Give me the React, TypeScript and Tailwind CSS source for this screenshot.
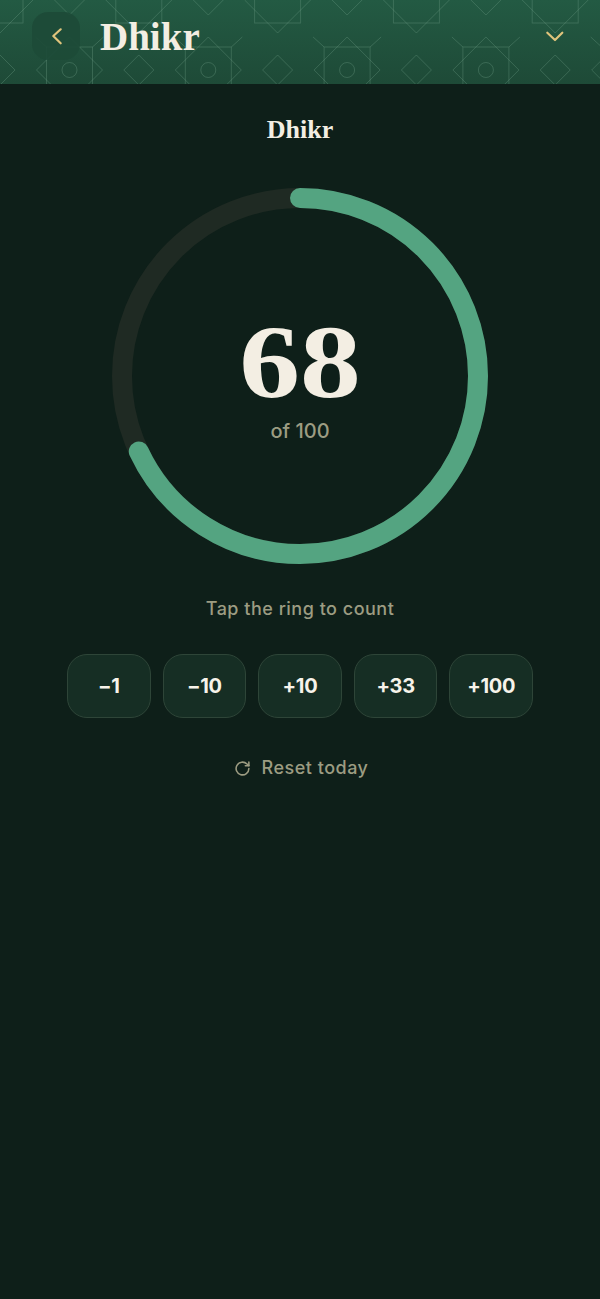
const star = (cx: number, cy: number, extras: boolean, key: string) => (
  <g key={key}>
    <rect x={cx - 23} y={cy - 23} width={46} height={46} />
    <path d={`M${cx} ${cy - 33}L${cx + 33} ${cy}L${cx} ${cy + 33}L${cx - 33} ${cy}Z`} />
    {extras && <path d={`M${cx - 34} ${cy - 33}L${cx - 23} ${cy - 23}M${cx + 34} ${cy - 33}L${cx + 23} ${cy - 23}`} />}
    {extras && <circle cx={cx} cy={cy} r={7.5} />}
  </g>
);
const diamond = (cx: number, cy: number, key: string) => (
  <path key={key} d={`M${cx} ${cy - 15}L${cx + 15} ${cy}L${cx} ${cy + 15}L${cx - 15} ${cy}Z`} />
);

function HeaderPattern() {
  const P = 138.8;
  const items = [];
  for (let i = 0; i < 6; i++) {
    items.push(star(69.5 + i * P, 70, true, `s${i}`));
    items.push(star(i * P, 0, false, `u${i}`));
    items.push(diamond(i * P, 70, `d${i}`));
    items.push(diamond(69.5 + i * P, 0, `e${i}`));
  }
  return (
    <svg className="absolute inset-0 h-full w-full" viewBox="0 0 600 84" fill="none" stroke="#6f9f86" strokeOpacity="0.34" strokeWidth="1">
      {items}
    </svg>
  );
}

function Ring() {
  const r = 178;
  const c = 2 * Math.PI * r;
  return (
    <svg width="400" height="400" viewBox="0 0 400 400" className="absolute inset-0" fill="none">
      <circle cx="200" cy="200" r={r} stroke="#1f2a23" strokeWidth="20" />
      <circle
        cx="200"
        cy="200"
        r={r}
        stroke="#54a481"
        strokeWidth="20"
        strokeLinecap="round"
        strokeDasharray={`${c * 0.68} ${c}`}
        transform="rotate(-90 200 200)"
      />
    </svg>
  );
}

const SANS = "font-['Inter','Noto_Sans',sans-serif]";

export default function App() {
  return (
    <div className="min-h-[1299px] w-[600px] bg-[#0e1f19] text-[#f3eee3]">
      <header className="relative flex h-[84px] items-center overflow-hidden bg-gradient-to-b from-[#235a43] to-[#1e4a37]">
        <HeaderPattern />
        <div className="relative flex h-[72px] w-full items-center self-start px-8">
          <button className="flex h-12 w-12 items-center justify-center rounded-2xl bg-[#1d4a37]/90 text-[#e0c47c]">
            <svg width="24" height="24" viewBox="0 0 24 24" fill="none" stroke="currentColor" strokeWidth="2.2" strokeLinecap="round" strokeLinejoin="round">
              <path d="M16.7 5.3 9.3 12l7.4 7.3" />
            </svg>
          </button>
          <h1 className="ml-5 font-['Liberation_Serif',serif] text-[39px] leading-none font-bold">Dhikr</h1>
          <svg className="mr-[1px] ml-auto text-[#e0c47c]" width="24" height="24" viewBox="0 0 24 24" fill="none" stroke="currentColor" strokeWidth="2.2" strokeLinecap="round" strokeLinejoin="round">
            <path d="M4.3 8.7 12 16l7.3-7.3" />
          </svg>
        </div>
      </header>

      <main className="flex flex-col items-center">
        <h2 className="mt-[31px] font-['Liberation_Serif',serif] text-[26px] leading-[30px] font-bold">Dhikr</h2>
        <div className="relative mt-[31px] h-[400px] w-[400px]">
          <Ring />
          <div className="relative flex h-full flex-col items-center">
            <div className="mt-[138px] scale-x-[1.17] font-['Liberation_Serif',serif] text-[104px] leading-[96px] font-bold">68</div>
            <div className={`${SANS} mt-[7px] text-[20px] leading-7 font-medium text-[#9c9c82]`}>of 100</div>
          </div>
        </div>
        <p className={`${SANS} mt-[19px] text-[18px] leading-7 font-medium tracking-[0.5px] text-[#9c9c82]`}>Tap the ring to count</p>
        <div className="mt-[31px] flex gap-3">
          {["-1", "-10", "+10", "+33", "+100"].map((t) => (
            <button key={t} className={`${SANS} flex h-[64px] w-[83.6px] items-center justify-center rounded-[20px] border border-[#2e4538] bg-[#162e24] text-[20px] font-bold tracking-[-0.3px] text-[#f7f3ea]`}>
              {t.replace("-", "−")}
            </button>
          ))}
        </div>
        <button className={`${SANS} mt-[36px] flex items-center gap-[11px] pl-[2px] text-[18px] leading-7 font-medium tracking-[0.5px] text-[#9c9c82]`}>
          <svg width="17" height="17" viewBox="0 0 24 24" fill="none" stroke="currentColor" strokeWidth="2.2" strokeLinecap="round" strokeLinejoin="round">
            <path d="M21 12a9 9 0 1 1-2.64-6.36L21 8" />
            <path d="M21 3v5h-5" />
          </svg>
          <span>Reset today</span>
        </button>
      </main>
    </div>
  );
}
